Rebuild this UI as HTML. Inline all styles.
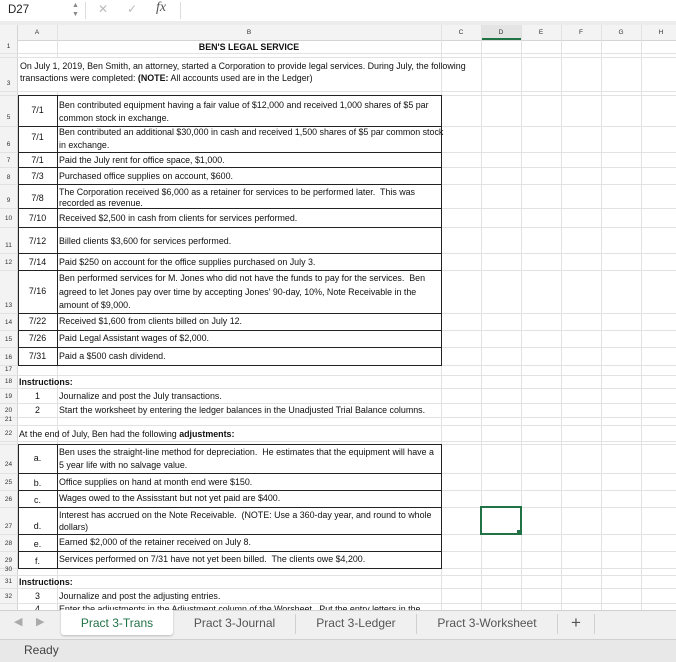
<!DOCTYPE html><html><head><style>
body{margin:0;width:676px;height:661px;overflow:hidden;background:#fff;font-family:"Liberation Sans",sans-serif;position:relative}
.a{position:absolute}
.t{position:absolute;font-size:8.9px;color:#111;white-space:nowrap;letter-spacing:0;line-height:12px}
.rn{position:absolute;left:0;width:17px;text-align:center;font-size:6.5px;color:#333}
.h{position:absolute;top:25px;height:15px;font-size:6.5px;color:#333;text-align:center;line-height:15px}
.vl{position:absolute;top:25px;height:585px;width:1px;background:#e2e2e2}
.hl{position:absolute;left:0;width:676px;height:1px;background:#e2e2e2}
</style></head><body>
<div class="a" style="left:0;top:0;width:676px;height:21px;background:#fff;border-bottom:1px solid #d0d0d0"></div>
<div class="a" style="left:0;top:21px;width:676px;height:4px;background:#ececec"></div>
<div class="t" style="left:8px;top:4px;font-size:11.5px;color:#222">D27</div>
<div class="t" style="left:72px;top:0px;font-size:7px;color:#888">▲</div>
<div class="t" style="left:72px;top:9px;font-size:7px;color:#888">▼</div>
<div class="a" style="left:85px;top:2px;width:1px;height:17px;background:#ddd"></div>
<div class="t" style="left:98px;top:3px;font-size:12px;color:#bbb">✕</div>
<div class="t" style="left:127px;top:3px;font-size:12px;color:#bbb">✓</div>
<div class="t" style="left:156px;top:2px;font-size:14px;color:#555;font-family:'Liberation Serif',serif;font-style:italic">fx</div>
<div class="a" style="left:180px;top:2px;width:1px;height:17px;background:#ddd"></div>
<div class="a" style="left:0;top:25px;width:676px;height:15px;background:#f3f3f3;border-bottom:1px solid #d4d4d4"></div>
<div class="a" style="left:0;top:25px;width:17px;height:585px;background:#f3f3f3;border-right:1px solid #d4d4d4"></div>
<div class="h" style="left:17px;width:40px">A</div>
<div class="h" style="left:57px;width:384px">B</div>
<div class="h" style="left:441px;width:40px">C</div>
<div class="h" style="left:481px;width:40px;background:#e4e4e4;border-bottom:2px solid #217346;height:13px">D</div>
<div class="h" style="left:521px;width:40px">E</div>
<div class="h" style="left:561px;width:40px">F</div>
<div class="h" style="left:601px;width:40px">G</div>
<div class="h" style="left:641px;width:40px">H</div>
<div class="vl" style="left:57px"></div><div class="vl" style="left:441px"></div><div class="vl" style="left:481px"></div><div class="vl" style="left:521px"></div><div class="vl" style="left:561px"></div><div class="vl" style="left:601px"></div><div class="vl" style="left:641px"></div>
<div class="hl" style="top:53px"></div><div class="hl" style="top:57px"></div><div class="hl" style="top:91px"></div><div class="hl" style="top:95px"></div><div class="hl" style="top:126px"></div><div class="hl" style="top:152px"></div><div class="hl" style="top:167px"></div><div class="hl" style="top:184px"></div><div class="hl" style="top:208px"></div><div class="hl" style="top:227px"></div><div class="hl" style="top:253px"></div><div class="hl" style="top:270px"></div><div class="hl" style="top:313px"></div><div class="hl" style="top:330px"></div><div class="hl" style="top:347px"></div><div class="hl" style="top:365px"></div><div class="hl" style="top:375px"></div><div class="hl" style="top:388px"></div><div class="hl" style="top:403px"></div><div class="hl" style="top:417px"></div><div class="hl" style="top:425px"></div><div class="hl" style="top:441px"></div><div class="hl" style="top:444px"></div><div class="hl" style="top:473px"></div><div class="hl" style="top:490px"></div><div class="hl" style="top:507px"></div><div class="hl" style="top:534px"></div><div class="hl" style="top:551px"></div><div class="hl" style="top:568px"></div><div class="hl" style="top:575px"></div><div class="hl" style="top:588px"></div><div class="hl" style="top:603px"></div>
<div class="a" style="left:18px;top:58px;width:423px;height:33px;background:#fff"></div>
<div class="rn" style="top:43px">1</div><div class="rn" style="top:80px">3</div><div class="rn" style="top:114px">5</div><div class="rn" style="top:141px">6</div><div class="rn" style="top:157px">7</div><div class="rn" style="top:174px">8</div><div class="rn" style="top:197px">9</div><div class="rn" style="top:215px">10</div><div class="rn" style="top:242px">11</div><div class="rn" style="top:259px">12</div><div class="rn" style="top:302px">13</div><div class="rn" style="top:319px">14</div><div class="rn" style="top:336px">15</div><div class="rn" style="top:354px">16</div><div class="rn" style="top:366px">17</div><div class="rn" style="top:378px">18</div><div class="rn" style="top:393px">19</div><div class="rn" style="top:407px">20</div><div class="rn" style="top:416px">21</div><div class="rn" style="top:430px">22</div><div class="rn" style="top:461px">24</div><div class="rn" style="top:479px">25</div><div class="rn" style="top:496px">26</div><div class="rn" style="top:523px">27</div><div class="rn" style="top:540px">28</div><div class="rn" style="top:557px">29</div><div class="rn" style="top:566px">30</div><div class="rn" style="top:578px">31</div><div class="rn" style="top:593px">32</div>
<div class="t" style="left:57px;width:384px;text-align:center;top:41px;font-weight:bold">BEN'S LEGAL SERVICE</div>
<div class="t" style="left:20px;top:60px">On July 1, 2019, Ben Smith, an attorney, started a Corporation to provide legal services. During July, the following</div>
<div class="t" style="left:20px;top:72px">transactions were completed: <b>(NOTE:</b> All accounts used are in the Ledger)</div>
<div class="a" style="left:18px;top:95px;width:422px;height:269px;border:1px solid #222;background:#fff"></div>
<div class="a" style="left:57px;top:95px;width:1px;height:270px;background:#222"></div>
<div class="a" style="left:18px;top:126px;width:423px;height:1px;background:#222"></div><div class="a" style="left:18px;top:152px;width:423px;height:1px;background:#222"></div><div class="a" style="left:18px;top:167px;width:423px;height:1px;background:#222"></div><div class="a" style="left:18px;top:184px;width:423px;height:1px;background:#222"></div><div class="a" style="left:18px;top:208px;width:423px;height:1px;background:#222"></div><div class="a" style="left:18px;top:227px;width:423px;height:1px;background:#222"></div><div class="a" style="left:18px;top:253px;width:423px;height:1px;background:#222"></div><div class="a" style="left:18px;top:270px;width:423px;height:1px;background:#222"></div><div class="a" style="left:18px;top:313px;width:423px;height:1px;background:#222"></div><div class="a" style="left:18px;top:330px;width:423px;height:1px;background:#222"></div><div class="a" style="left:18px;top:347px;width:423px;height:1px;background:#222"></div>
<div class="t" style="left:18px;width:39px;text-align:center;top:104px">7/1</div>
<div class="t" style="left:59px;top:99px">Ben contributed equipment having a fair value of $12,000 and received 1,000 shares of $5 par</div>
<div class="t" style="left:59px;top:112px">common stock in exchange.</div>
<div class="t" style="left:18px;width:39px;text-align:center;top:131px">7/1</div>
<div class="t" style="left:59px;top:126px">Ben contributed an additional $30,000 in cash and received 1,500 shares of $5 par common stock</div>
<div class="t" style="left:59px;top:139px">in exchange.</div>
<div class="t" style="left:18px;width:39px;text-align:center;top:154px">7/1</div><div class="t" style="left:59px;top:154px">Paid the July rent for office space, $1,000.</div>
<div class="t" style="left:18px;width:39px;text-align:center;top:170px">7/3</div><div class="t" style="left:59px;top:170px">Purchased office supplies on account, $600.</div>
<div class="t" style="left:18px;width:39px;text-align:center;top:192px">7/8</div>
<div class="t" style="left:59px;top:186px">The Corporation received $6,000 as a retainer for services to be performed later.&nbsp; This was</div>
<div class="t" style="left:59px;top:197px">recorded as revenue.</div>
<div class="t" style="left:18px;width:39px;text-align:center;top:212px">7/10</div><div class="t" style="left:59px;top:212px">Received $2,500 in cash from clients for services performed.</div>
<div class="t" style="left:18px;width:39px;text-align:center;top:235px">7/12</div><div class="t" style="left:59px;top:235px">Billed clients $3,600 for services performed.</div>
<div class="t" style="left:18px;width:39px;text-align:center;top:256px">7/14</div><div class="t" style="left:59px;top:256px">Paid $250 on account for the office supplies purchased on July 3.</div>
<div class="t" style="left:18px;width:39px;text-align:center;top:285px">7/16</div>
<div class="t" style="left:59px;top:272px">Ben performed services for M. Jones who did not have the funds to pay for the services.&nbsp; Ben</div>
<div class="t" style="left:59px;top:286px">agreed to let Jones pay over time by accepting Jones' 90-day, 10%, Note Receivable in the</div>
<div class="t" style="left:59px;top:299px">amount of $9,000.</div>
<div class="t" style="left:18px;width:39px;text-align:center;top:315px">7/22</div><div class="t" style="left:59px;top:315px">Received $1,600 from clients billed on July 12.</div>
<div class="t" style="left:18px;width:39px;text-align:center;top:332px">7/26</div><div class="t" style="left:59px;top:332px">Paid Legal Assistant wages of $2,000.</div>
<div class="t" style="left:18px;width:39px;text-align:center;top:350px">7/31</div><div class="t" style="left:59px;top:350px">Paid a $500 cash dividend.</div>
<div class="t" style="left:19px;top:376px;font-weight:bold">Instructions:</div>
<div class="t" style="left:18px;width:39px;text-align:center;top:390px">1</div><div class="t" style="left:59px;top:390px">Journalize and post the July transactions.</div>
<div class="t" style="left:18px;width:39px;text-align:center;top:404px">2</div><div class="t" style="left:59px;top:404px">Start the worksheet by entering the ledger balances in the Unadjusted Trial Balance columns.</div>
<div class="t" style="left:19px;top:428px">At the end of July, Ben had the following <b>adjustments:</b></div>
<div class="a" style="left:18px;top:444px;width:422px;height:123px;border:1px solid #222;background:#fff"></div>
<div class="a" style="left:57px;top:444px;width:1px;height:124px;background:#222"></div>
<div class="a" style="left:18px;top:473px;width:423px;height:1px;background:#222"></div><div class="a" style="left:18px;top:490px;width:423px;height:1px;background:#222"></div><div class="a" style="left:18px;top:507px;width:423px;height:1px;background:#222"></div><div class="a" style="left:18px;top:534px;width:423px;height:1px;background:#222"></div><div class="a" style="left:18px;top:551px;width:423px;height:1px;background:#222"></div>
<div class="t" style="left:18px;width:39px;text-align:center;top:452px">a.</div>
<div class="t" style="left:59px;top:446px">Ben uses the straight-line method for depreciation.&nbsp; He estimates that the equipment will have a</div>
<div class="t" style="left:59px;top:459px">5 year life with no salvage value.</div>
<div class="t" style="left:18px;width:39px;text-align:center;top:477px">b.</div><div class="t" style="left:59px;top:476px">Office supplies on hand at month end were $150.</div>
<div class="t" style="left:18px;width:39px;text-align:center;top:494px">c.</div><div class="t" style="left:59px;top:492px">Wages owed to the Assisstant but not yet paid are $400.</div>
<div class="t" style="left:18px;width:39px;text-align:center;top:520px">d.</div>
<div class="t" style="left:59px;top:509px">Interest has accrued on the Note Receivable.&nbsp; (NOTE: Use a 360-day year, and round to whole</div>
<div class="t" style="left:59px;top:521px">dollars)</div>
<div class="t" style="left:18px;width:39px;text-align:center;top:538px">e.</div><div class="t" style="left:59px;top:536px">Earned $2,000 of the retainer received on July 8.</div>
<div class="t" style="left:18px;width:39px;text-align:center;top:555px">f.</div><div class="t" style="left:59px;top:553px">Services performed on 7/31 have not yet been billed.&nbsp; The clients owe $4,200.</div>
<div class="t" style="left:19px;top:576px;font-weight:bold">Instructions:</div>
<div class="t" style="left:18px;width:39px;text-align:center;top:590px">3</div><div class="t" style="left:59px;top:590px">Journalize and post the adjusting entries.</div>
<div class="t" style="left:18px;width:39px;text-align:center;top:603px">4</div><div class="t" style="left:59px;top:603px">Enter the adjustments in the Adjustment column of the Worsheet.&nbsp; Put the entry letters in the</div>
<div class="a" style="left:480px;top:506px;width:38px;height:25px;border:2px solid #217346"></div>
<div class="a" style="left:517px;top:530px;width:4px;height:4px;background:#217346"></div>
<div class="a" style="left:0;top:610px;width:676px;height:29px;background:#f0f0f0;border-top:1px solid #d0d0d0"></div>
<div class="t" style="left:14px;top:616px;font-size:11px;color:#aaa">◀</div>
<div class="t" style="left:36px;top:616px;font-size:11px;color:#aaa">▶</div>
<div class="a" style="left:61px;top:610px;width:112px;height:25px;background:#fff;border-radius:0 0 3px 3px;box-shadow:0 1px 2px #bbb"></div>
<div class="t" style="left:61px;width:112px;text-align:center;top:615px;font-size:12px;color:#217346;line-height:16px">Pract 3-Trans</div>
<div class="t" style="left:174px;width:121px;text-align:center;top:615px;font-size:12px;color:#555;line-height:16px">Pract 3-Journal</div>
<div class="a" style="left:295px;top:614px;width:1px;height:20px;background:#d0d0d0"></div>
<div class="t" style="left:296px;width:120px;text-align:center;top:615px;font-size:12px;color:#555;line-height:16px">Pract 3-Ledger</div>
<div class="a" style="left:416px;top:614px;width:1px;height:20px;background:#d0d0d0"></div>
<div class="t" style="left:417px;width:140px;text-align:center;top:615px;font-size:12px;color:#555;line-height:16px">Pract 3-Worksheet</div>
<div class="a" style="left:557px;top:614px;width:1px;height:20px;background:#d0d0d0"></div>
<div class="t" style="left:558px;width:36px;text-align:center;top:613px;font-size:17px;color:#555;line-height:20px">+</div>
<div class="a" style="left:594px;top:614px;width:1px;height:20px;background:#d0d0d0"></div>
<div class="a" style="left:0;top:639px;width:676px;height:22px;background:#e8e8e8;border-top:1px solid #d0d0d0"></div>
<div class="t" style="left:24px;top:643px;font-size:12px;color:#444;line-height:14px">Ready</div>
</body></html>
